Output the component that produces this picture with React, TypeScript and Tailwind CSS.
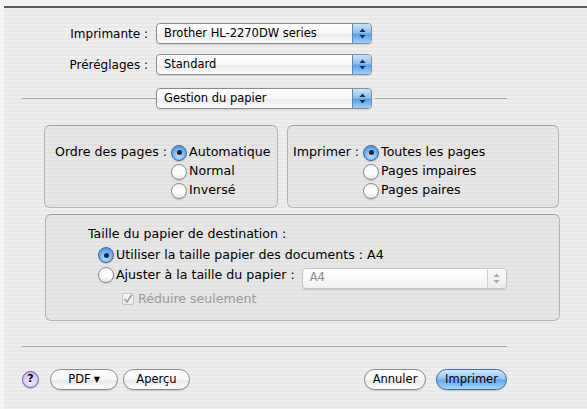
import React from 'react'

const font = { fontFamily: '"DejaVu Sans", "Liberation Sans", sans-serif' }

function Stepper({ disabled }: { disabled?: boolean }) {
  return (
    <div
      className={`w-[19px] h-full flex items-center justify-center rounded-r-[4px] border-l ${
        disabled
          ? 'border-[#d0d0d0] bg-[linear-gradient(180deg,#fafafa,#ececec)]'
          : 'border-[#5d86b8] bg-[linear-gradient(180deg,#c9e2fa_0%,#8ec0f0_45%,#5a9fe8_55%,#9fd0fb_100%)]'
      }`}
    >
      <svg width="7" height="11" viewBox="0 0 7 11">
        <path d="M3.5 0.5 L6.5 4 L0.5 4 Z" fill={disabled ? '#a8a8a8' : '#1b2b45'} />
        <path d="M3.5 10.5 L6.5 7 L0.5 7 Z" fill={disabled ? '#a8a8a8' : '#1b2b45'} />
      </svg>
    </div>
  )
}

function Popup({ value, width, disabled }: { value: string; width: string; disabled?: boolean }) {
  return (
    <div
      className={`${width} h-[21px] flex items-stretch rounded-[4px] border shadow-[0_1px_1px_rgba(0,0,0,0.12)] ${
        disabled
          ? 'border-[#c4c4c4] bg-[linear-gradient(180deg,#ffffff,#f3f3f3)]'
          : 'border-[#8c8c8c] bg-[linear-gradient(180deg,#ffffff_0%,#f7f7f7_50%,#ececec_52%,#fafafa_100%)]'
      }`}
    >
      <div className={`flex-1 flex items-center pl-[7px] text-[11.5px] ${disabled ? 'text-[#8a8a8a]' : 'text-black'}`}>
        {value}
      </div>
      <Stepper disabled={disabled} />
    </div>
  )
}

function Radio({ checked }: { checked?: boolean }) {
  return (
    <span
      className={`w-[16px] h-[16px] shrink-0 rounded-full border flex items-center justify-center shadow-[0_1px_1px_rgba(0,0,0,0.15)] ${
        checked
          ? 'border-[#3d679e] bg-[radial-gradient(circle_at_50%_70%,#bfe3ff_0%,#79b6f2_45%,#3d87dc_100%)]'
          : 'border-[#8d8d8d] bg-[linear-gradient(180deg,#f4f4f4,#ffffff_60%,#e6e6e6)]'
      }`}
    >
      {checked && <span className="w-[5px] h-[5px] rounded-full bg-[#16243a]" />}
    </span>
  )
}

function RadioRow({ label, checked }: { label: string; checked?: boolean }) {
  return (
    <div className="h-[19px] flex items-center gap-[2px]">
      <Radio checked={checked} />
      <span>{label}</span>
    </div>
  )
}

function Button({ children, width, primary }: { children: React.ReactNode; width: string; primary?: boolean }) {
  return (
    <div
      className={`${width} h-[21px] rounded-full border flex items-center justify-center text-[11.5px] shadow-[0_1px_1px_rgba(0,0,0,0.15)] ${
        primary
          ? 'border-[#3b6aa6] bg-[linear-gradient(180deg,#d3eafd_0%,#8fc4f4_48%,#5fa6ec_52%,#a9d6fc_100%)]'
          : 'border-[#8a8a8a] bg-[linear-gradient(180deg,#ffffff_0%,#f6f6f6_50%,#e9e9e9_52%,#fbfbfb_100%)]'
      }`}
    >
      {children}
    </div>
  )
}

const stripes = 'bg-[repeating-linear-gradient(180deg,#eeeeee_0px,#eeeeee_2px,#e8e8e8_2px,#e8e8e8_4px)]'
const boxStripes =
  'bg-[repeating-linear-gradient(180deg,#e7e7e7_0px,#e7e7e7_2px,#e1e1e1_2px,#e1e1e1_4px)] border border-[#b4b4b4] border-t-[#9c9c9c] rounded-[6px] text-[12.6px]'

export default function App() {
  return (
    <div className="w-[587px] h-[409px] bg-[#f6f6f6] overflow-hidden text-[12px] text-black" style={font}>
      <div className={`ml-[4px] mt-[6px] h-[403px] border-t-2 border-[#5c5c5c] ${stripes}`}>
        {/* Imprimante / Préréglages */}
        <div className="pt-[15px] flex items-center">
          <div className="w-[144px] text-right">Imprimante :</div>
          <div className="ml-[8px]">
            <Popup value="Brother HL-2270DW series" width="w-[216px]" />
          </div>
        </div>
        <div className="mt-[10px] flex items-center">
          <div className="w-[144px] text-right">Préréglages :</div>
          <div className="ml-[8px]">
            <Popup value="Standard" width="w-[216px]" />
          </div>
        </div>

        {/* Panel selector */}
        <div className="mt-[13px] pl-[18px] flex items-center">
          <div className="w-[134px] h-px bg-[#a6a6a6]" />
          <Popup value="Gestion du papier" width="w-[216px]" />
          <div className="ml-[3px] w-[132px] h-px bg-[#a6a6a6]" />
        </div>

        {/* Order / pages */}
        <div className="mt-[16px] pl-[40px] flex gap-[9px]">
          <div className={`w-[234px] h-[83px] ${boxStripes} pt-[17px] pl-[10px] flex`}>
            <div className="h-[19px] flex items-center">Ordre des pages :</div>
            <div className="ml-[4px] flex flex-col">
              <RadioRow label="Automatique" checked />
              <RadioRow label="Normal" />
              <RadioRow label="Inversé" />
            </div>
          </div>
          <div className={`w-[272px] h-[83px] ${boxStripes} pt-[17px] pl-[5px] flex`}>
            <div className="h-[19px] flex items-center">Imprimer :</div>
            <div className="ml-[4px] flex flex-col">
              <RadioRow label="Toutes les pages" checked />
              <RadioRow label="Pages impaires" />
              <RadioRow label="Pages paires" />
            </div>
          </div>
        </div>

        {/* Destination paper size */}
        <div className="mt-[6px] pl-[41px]">
          <div className={`w-[515px] h-[107px] ${boxStripes} pt-[10px]`}>
            <div className="pl-[42px] h-[19px] flex items-center">Taille du papier de destination :</div>
            <div className="pl-[52px] mt-[1px] h-[20px] flex items-center gap-[2px]">
              <Radio checked />
              <span>Utiliser la taille papier des documents : A4</span>
            </div>
            <div className="pl-[52px] h-[20px] flex items-center gap-[2px]">
              <Radio />
              <span>Ajuster à la taille du papier :</span>
              <div className="ml-[5px] mt-[6px]">
                <Popup value="A4" width="w-[205px]" disabled />
              </div>
            </div>
            <div className="pl-[76px] mt-[5px] h-[18px] flex items-center gap-[4px] text-[#9b9b9b]">
              <span className="w-[12px] h-[12px] border border-[#c2c2c2] rounded-[2px] bg-[linear-gradient(180deg,#f8f8f8,#e9e9e9)] flex items-center justify-center">
                <svg width="10" height="10" viewBox="0 0 10 10">
                  <path d="M1.5 5 L4 8 L9 0.5" stroke="#9a9a9a" strokeWidth="1.6" fill="none" />
                </svg>
              </span>
              <span>Réduire seulement</span>
            </div>
          </div>
        </div>

        {/* Bottom separator */}
        <div className="mt-[25px] ml-[18px] w-[485px] h-px bg-[#a6a6a6]" />

        {/* Buttons */}
        <div className="mt-[22px] ml-[18px] w-[485px] flex items-center justify-between">
          <div className="flex items-center">
            <div className="w-[17px] h-[17px] rounded-full border border-[#6f5f98] bg-[radial-gradient(circle_at_50%_70%,#f3ecff_0%,#d7c6f2_60%,#b9a4e0_100%)] flex items-center justify-center text-[11px] font-bold shadow-[0_1px_1px_rgba(0,0,0,0.2)]">
              ?
            </div>
            <div className="ml-[11px]">
              <Button width="w-[68px]">
                PDF <span className="ml-[3px] text-[8px]">▼</span>
              </Button>
            </div>
            <div className="ml-[5px]">
              <Button width="w-[67px]">Aperçu</Button>
            </div>
          </div>
          <div className="flex items-center gap-[10px]">
            <Button width="w-[62px]">Annuler</Button>
            <Button width="w-[71px]" primary>
              Imprimer
            </Button>
          </div>
        </div>
      </div>
    </div>
  )
}
